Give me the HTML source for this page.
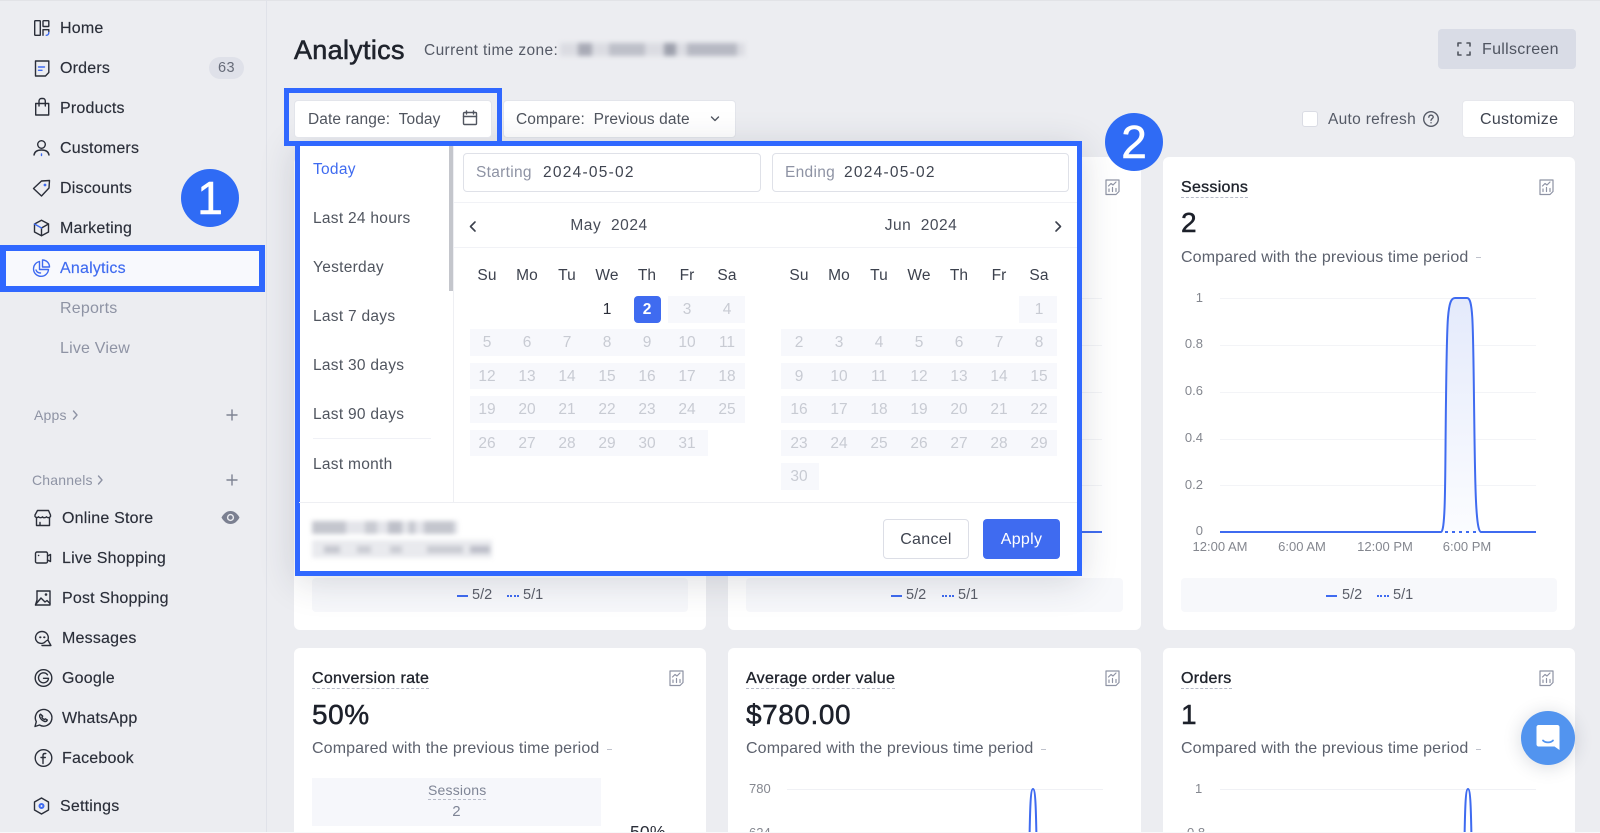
<!DOCTYPE html>
<html><head><meta charset="utf-8"><title>Analytics</title>
<style>
*{box-sizing:border-box}
html,body{margin:0;padding:0;width:1600px;height:833px;overflow:hidden;background:#ECEDF1;font-family:"Liberation Sans",sans-serif;color:#2A2E39}
#w{position:relative;width:1600px;height:833px;overflow:hidden;background:#ECEDF1}
.a{position:absolute}
.t{position:absolute;white-space:nowrap;line-height:20px;font-size:16px;letter-spacing:.2px;transform:translateY(1px)}
.n{color:#2A2E39;left:60px;-webkit-text-stroke:.15px #2A2E39}
.c{left:62px;-webkit-text-stroke:.15px #2A2E39}
.g{color:#8E93A4;-webkit-text-stroke:0}
.btn{position:absolute;background:#fff;border:1px solid #E3E5EB;border-radius:4px}
.card{position:absolute;background:#fff;border-radius:6px}
.sub{color:#5C616D;font-size:16px;letter-spacing:.12px}
.title{color:#1F232C;font-size:16px;font-weight:500;letter-spacing:.28px;border-bottom:1px dashed #B8BCC9;line-height:18px;-webkit-text-stroke:.35px #1F232C}
.val{font-size:28px;letter-spacing:.55px;color:#1C202A;line-height:34px;font-weight:500;-webkit-text-stroke:.5px #1C202A}
.lbl{position:absolute;font-size:13px;color:#84878F;line-height:16px;white-space:nowrap}
.lbl.r{text-align:right;width:40px}
.lbl.mc{text-align:center;width:80px}
.leg{position:absolute;height:34px;background:#F7F8FB;border-radius:4px;top:578px}
.lg{position:absolute;top:587px;font-size:14.5px;line-height:16px;color:#5A5E69;white-space:nowrap}
.b1{position:absolute;top:595px;width:11px;height:2px;background:#3F6BF0}
.b2{position:absolute;top:595px;width:12px;height:0;border-top:2px dotted #3F6BF0}
.m{color:#50555F;left:313px;font-size:15.5px;letter-spacing:.28px}
.row{position:absolute;display:grid;grid-template-columns:repeat(7,40px);height:26.5px;line-height:26.5px;text-align:center;font-size:15.5px;color:#C8CBD3;transform:translateY(1px)}
.head{color:#3C414D;letter-spacing:.1px}
.bg{position:absolute;height:26.5px;background:#F7F8FC}
.blur{position:absolute;filter:blur(2.4px);display:flex;gap:1px;align-items:center}
.blur i{display:block;height:100%}
svg.i{position:absolute;overflow:visible;fill:none;stroke:#2A2E39;stroke-width:1.4;stroke-linejoin:round;stroke-linecap:round}
</style></head>
<body><div id="w">
<div class="a" style="left:0;top:0;width:1600px;height:1px;background:#E2E3E7"></div>
<div class="a" style="left:266px;top:0;width:1px;height:833px;background:#E0E2E9"></div>

<!-- SIDEBAR -->
<svg class="i" style="left:32px;top:18px" width="20" height="20" viewBox="0 0 20 20"><rect x="2.7" y="2.700" width="5.600" height="14.600" rx=".6"/><rect x="11" y="2.700" width="5.800" height="5.800" rx=".6"/><path d="M11 17.300v-5.600h5.800v2"/><path d="M16.800 14.500c0 1.600-1 2.800-2.600 2.800" stroke="#3F6BF0"/></svg>
<div class="t n" style="top:18px">Home</div>
<svg class="i" style="left:32px;top:58px" width="20" height="20" viewBox="0 0 20 20"><path d="M3.500 3h13.300v11.500L13.500 18H3.500z"/><path d="M6.500 9h6M6.500 12.300h3.500" stroke="#3F6BF0"/></svg>
<div class="t n" style="top:58px">Orders</div>
<div class="a" style="left:209px;top:57px;width:35px;height:22px;border-radius:11px;background:#DFE1E9;color:#666B78;font-size:14.500px;line-height:23px;text-align:center;letter-spacing:.4px">63</div>
<svg class="i" style="left:32px;top:97px" width="20" height="20" viewBox="0 0 20 20"><path d="M3.700 6.500h13v11.500h-13z"/><path d="M7 9V4.200C7 2.800 8 1.500 9.300 1.500h1.800c1.300 0 2.200 1.300 2.200 2.700V9"/></svg>
<div class="t n" style="top:98px">Products</div>
<svg class="i" style="left:31px;top:138px" width="20" height="20" viewBox="0 0 20 20"><circle cx="10.500" cy="6.500" r="3.800"/><path d="M3 17c.6-3.600 3.400-5 7.500-5s6.900 1.400 7.500 5"/><path d="M10.500 16v1.500" stroke="#3F6BF0"/></svg>
<div class="t n" style="top:138px">Customers</div>
<svg class="i" style="left:31px;top:178px" width="20" height="20" viewBox="0 0 20 20"><path d="M2.500 10.500 10.500 3l8-.5-.5 7.500-7.500 8z"/><circle cx="14" cy="7" r=".7" stroke="#3F6BF0"/></svg>
<div class="t n" style="top:178px">Discounts</div>
<svg class="i" style="left:31px;top:218px" width="20" height="20" viewBox="0 0 20 20"><path d="M10.500 2.200 17.500 6v8l-7 3.800L3.500 14V6z"/><path d="M10.500 10l7-4M10.500 10v7.500"/><path d="M3.500 6l7 4" stroke="#3F6BF0"/></svg>
<div class="t n" style="top:218px">Marketing</div>

<div class="a" style="left:0;top:245px;width:265px;height:47px;border:6px solid #3068FF;background:#F8F9FD"></div>
<svg class="i" style="left:31px;top:258px;stroke:#3F6BF0" width="20" height="20" viewBox="0 0 20 20"><path d="M8.500 3.500A7.500 7.500 0 1 0 17.500 11.500H8.500z"/><path d="M11.500 2a7 7 0 0 1 7 7h-7z"/><path d="M5 12c.8 2 2.500 3 4.500 3"/></svg>
<div class="t" style="left:60px;top:258px;color:#3F6BF0;-webkit-text-stroke:.15px #3F6BF0">Analytics</div>
<div class="t n g" style="top:298px">Reports</div>
<div class="t n g" style="top:338px">Live View</div>
<div class="a" style="left:181px;top:169px;width:58px;height:58px;border-radius:50%;background:#2F6BF5;color:#fff;font-size:46px;line-height:58px;text-align:center;-webkit-text-stroke:.6px #fff">1</div>

<div class="t g" style="left:34px;top:404px;font-size:14px">Apps</div>
<svg class="i" style="left:71px;top:408px;stroke:#8E93A4" width="8" height="14" viewBox="0 0 8 14"><path d="M2.500 3l3.500 4-3.500 4"/></svg>
<svg class="i" style="left:226px;top:409px;stroke:#7E8393" width="12" height="12" viewBox="0 0 12 12"><path d="M6 1v10M1 6h10"/></svg>
<div class="t g" style="left:32px;top:469px;font-size:14px">Channels</div>
<svg class="i" style="left:96px;top:473px;stroke:#8E93A4" width="8" height="14" viewBox="0 0 8 14"><path d="M2.500 3l3.500 4-3.500 4"/></svg>
<svg class="i" style="left:226px;top:474px;stroke:#7E8393" width="12" height="12" viewBox="0 0 12 12"><path d="M6 1v10M1 6h10"/></svg>

<svg class="i" style="left:33px;top:508px" width="20" height="20" viewBox="0 0 20 20"><path d="M4.500 2.500h11l2 4.500v1.500c-1 1.500-3 1.500-4 .3-1 1.200-3.500 1.200-4 0-1 1.200-3 1.200-4 0-1 1.200-2.500 1-3.500-.3V7z"/><path d="M3.500 9.500v8h13v-8M7 17.500v-3"/></svg>
<div class="t c" style="top:507.500px">Online Store</div>
<svg class="a" style="left:221px;top:510px" width="19" height="15" viewBox="0 0 19 15"><path d="M.5 7.500C3 3 6 1 9.500 1s6.500 2 9 6.500c-2.500 4.500-5.500 6.500-9 6.500S3 12 .5 7.500z" fill="#7B8091"/><circle cx="9.500" cy="7.500" r="3.600" fill="#ECEDF1"/><circle cx="9.500" cy="7.500" r="2.200" fill="#7B8091"/></svg>
<svg class="i" style="left:33px;top:548px" width="20" height="20" viewBox="0 0 20 20"><rect x="2.500" y="4" width="12" height="11" rx="1.500"/><path d="M14.500 8l3-1.500v7l-3-1.500"/><path d="M5.500 7.500h.2"/></svg>
<div class="t c" style="top:547.500px">Live Shopping</div>
<svg class="i" style="left:33px;top:588px" width="20" height="20" viewBox="0 0 20 20"><path d="M4 3h13v14H2.500"/><path d="M4 3v9l-1.500 5"/><path d="M3 16l5-6 4 4 2-1.500 3 3"/><circle cx="13" cy="6.500" r=".6"/></svg>
<div class="t c" style="top:587.500px">Post Shopping</div>
<svg class="i" style="left:33px;top:628px" width="20" height="20" viewBox="0 0 20 20"><path d="M5 14.500C3.300 13.200 2.500 11.500 2.500 9.800 2.500 6.200 5.500 3.500 9 3.500s6.300 2.700 6.300 6.300c0 .8-.1 1.500-.4 2.200"/><path d="M5 14.500c2.500 1.500 5.500 1.200 7-.5 1-1 2-1.800 2.900-2l3 5.500H9"/><path d="M7 9.300h.6M11 9.300h.6" stroke-width="1.800"/></svg>
<div class="t c" style="top:627.500px">Messages</div>
<svg class="i" style="left:33px;top:668px" width="20" height="20" viewBox="0 0 20 20"><circle cx="10.500" cy="10" r="8.300"/><path d="M14.500 6.800a5 5 0 1 0 1 3.500H10.500"/></svg>
<div class="t c" style="top:667.500px">Google</div>
<svg class="i" style="left:33px;top:708px" width="20" height="20" viewBox="0 0 20 20"><path d="M2 18.500l1.300-4.800A8.300 8.300 0 1 1 6.500 17z"/><path d="M7.500 6.200c-1 .8-1.200 2-.3 3.600 1 1.800 2.500 3 4.300 3.600 1.300.3 2.400-.3 2.800-1.400l-2-1.200-1 .8c-1-.4-2-1.400-2.400-2.400l.8-1z"/></svg>
<div class="t c" style="top:707.500px">WhatsApp</div>
<svg class="i" style="left:33px;top:748px" width="20" height="20" viewBox="0 0 20 20"><circle cx="10.500" cy="10" r="8.300"/><path d="M12.800 5.500h-.8c-1.200 0-2 .8-2 2v8M8 9.500h4.300"/></svg>
<div class="t c" style="top:747.500px">Facebook</div>
<svg class="i" style="left:31px;top:796px" width="20" height="20" viewBox="0 0 20 20"><path d="M10.500 2l7 4v8l-7 4-7-4V6z"/><circle cx="10.500" cy="10" r="2" stroke="#3F6BF0" stroke-width="2"/></svg>
<div class="t n" style="top:796px">Settings</div>

<!-- HEADER -->
<div class="t" style="left:294px;top:34px;line-height:30px;font-size:27px;font-weight:500;color:#1F232C;letter-spacing:.3px;-webkit-text-stroke:.6px #1F232C">Analytics</div>
<div class="t" style="left:424px;top:40px;color:#555A66;font-size:15.500px;letter-spacing:.37px">Current time zone:</div>
<div class="blur" style="left:560px;top:43px;width:185px;height:13px;background:#DBDCE2"><i style="margin-left:18px;width:14px;background:#A9ABB6"></i><i style="margin-left:16px;width:36px;background:#BEC0C9"></i><i style="margin-left:18px;width:12px;background:#9EA1AD"></i><i style="margin-left:10px;width:50px;background:#B7B9C3"></i></div>
<div class="a" style="left:1438px;top:29px;width:138px;height:40px;background:#D9DCE6;border-radius:4px"></div>
<svg class="i" style="left:1457px;top:42px;stroke:#50555F;stroke-width:1.600" width="14" height="14" viewBox="0 0 14 14"><path d="M1 4V1h3M10 1h3v3M13 10v3h-3M4 13H1v-3"/></svg>
<div class="t" style="left:1482px;top:39px;color:#4F5460;font-size:16px;letter-spacing:.3px">Fullscreen</div>

<div class="btn" style="left:503px;top:100px;width:233px;height:38px"></div>
<div class="t" style="left:516px;top:109px;color:#50555F;font-size:15.500px;letter-spacing:.1px">Compare:&nbsp; Previous date</div>
<svg class="i" style="left:709px;top:114px;stroke:#50555F" width="12" height="10" viewBox="0 0 12 10"><path d="M2.500 3l3.500 3.500L9.500 3"/></svg>
<div class="a" style="left:1302px;top:111px;width:16px;height:16px;background:#fff;border:1px solid #DADCE4;border-radius:3px"></div>
<div class="t" style="left:1328px;top:109px;color:#555A66;font-size:15.500px;letter-spacing:.3px">Auto refresh</div>
<svg class="i" style="left:1422px;top:110px;stroke:#555A66" width="18" height="18" viewBox="0 0 18 18"><circle cx="9" cy="9" r="7.300"/><path d="M6.800 7.200C7 5.800 8 5.200 9 5.200c1.300 0 2.200.8 2.200 1.900 0 1.600-2.200 1.600-2.200 3.300"/><path d="M9 12.800h.1"/></svg>
<div class="btn" style="left:1462px;top:100px;width:113px;height:38px;border-color:#E7E8ED"></div>
<div class="t" style="left:1480px;top:109px;color:#3F4450;font-size:16px;letter-spacing:.3px">Customize</div>

<!-- CARDS ROW 1 -->
<div class="card" style="left:294px;top:157px;width:412px;height:473px"></div>
<div class="card" style="left:728px;top:157px;width:413px;height:473px"></div>
<div class="card" style="left:1163px;top:157px;width:412px;height:473px"></div>

<div class="leg" style="left:312px;width:376px"></div>
<div class="b1" style="left:457px"></div><div class="lg" style="left:472px">5/2</div><div class="b2" style="left:507px"></div><div class="lg" style="left:523px">5/1</div>
<div class="leg" style="left:746px;width:377px"></div>
<div class="b1" style="left:891px"></div><div class="lg" style="left:906px">5/2</div><div class="b2" style="left:942px"></div><div class="lg" style="left:958px">5/1</div>
<div class="leg" style="left:1181px;width:376px"></div>
<div class="b1" style="left:1326px"></div><div class="lg" style="left:1342px">5/2</div><div class="b2" style="left:1377px"></div><div class="lg" style="left:1393px">5/1</div>

<svg class="i" style="left:1105px;top:179px;stroke:#8E93A4;stroke-width:1.200" width="15" height="16" viewBox="0 0 15 16"><path d="M1 1h13v11.500L11 15.500H1z"/><path d="M3.500 7l2.500-2.500L8 6l3-3M4 12.500V10M7.500 12.500V8.500M11 12.500V9.500"/></svg>
<svg class="a" style="left:1082px;top:290px" width="30" height="250"><g fill="#F3F4F7"><rect y="8" width="20" height="1"/><rect y="55" width="20" height="1"/><rect y="102" width="20" height="1"/><rect y="149" width="20" height="1"/><rect y="195" width="20" height="1"/></g><rect y="241" width="20" height="2" fill="#3F6BF0"/></svg>

<!-- Sessions -->
<div class="t title" style="left:1181px;top:178px">Sessions</div>
<svg class="i" style="left:1539px;top:179px;stroke:#8E93A4;stroke-width:1.200" width="15" height="16" viewBox="0 0 15 16"><path d="M1 1h13v11.500L11 15.500H1z"/><path d="M3.500 7l2.500-2.500L8 6l3-3M4 12.500V10M7.500 12.500V8.500M11 12.500V9.500"/></svg>
<div class="t val" style="left:1181px;top:205px">2</div>
<div class="t sub" style="left:1181px;top:247px">Compared with the previous time period</div>
<div class="a" style="left:1476px;top:257px;width:5px;height:1px;background:#BFC2CC"></div>
<svg class="a" style="left:0;top:0" width="1600" height="833">
<defs><linearGradient id="gr" x1="0" y1="0" x2="0" y2="1"><stop offset="0" stop-color="#E4EAFB"/><stop offset="1" stop-color="#FBFCFF"/></linearGradient></defs>
<g fill="#F3F4F7"><rect x="1220" y="298" width="316" height="1"/><rect x="1220" y="345" width="316" height="1"/><rect x="1220" y="392" width="316" height="1"/><rect x="1220" y="439" width="316" height="1"/><rect x="1220" y="485" width="316" height="1"/></g>
<path d="M1441 532C1446 532 1445 470 1446 400C1447 320 1447 298 1455 298H1467C1473 298 1473 320 1474 400C1475 470 1475 532 1481 532Z" fill="url(#gr)"/>
<path d="M1220 532H1441C1446 532 1445 470 1446 400C1447 320 1447 298 1455 298H1467C1473 298 1473 320 1474 400C1475 470 1475 532 1481 532H1536" fill="none" stroke="#3F6BF0" stroke-width="2"/>
<path d="M1445 532H1478" fill="none" stroke="#3F6BF0" stroke-width="2" stroke-dasharray="3 4"/>
</svg>
<div class="lbl r" style="left:1163px;top:290px">1</div>
<div class="lbl r" style="left:1163px;top:336px">0.8</div>
<div class="lbl r" style="left:1163px;top:383px">0.6</div>
<div class="lbl r" style="left:1163px;top:430px">0.4</div>
<div class="lbl r" style="left:1163px;top:477px">0.2</div>
<div class="lbl r" style="left:1163px;top:523px">0</div>
<div class="lbl mc" style="left:1180px;top:539px">12:00 AM</div>
<div class="lbl mc" style="left:1262px;top:539px">6:00 AM</div>
<div class="lbl mc" style="left:1345px;top:539px">12:00 PM</div>
<div class="lbl mc" style="left:1427px;top:539px">6:00 PM</div>

<!-- MODAL -->
<div class="a" style="left:295px;top:141px;width:787px;height:435px;background:#fff;border:5px solid #3068FF;box-shadow:0 6px 34px rgba(40,45,65,.16)"></div>
<div class="a" style="left:449px;top:146px;width:4px;height:145px;background:#C4C6CC"></div>
<div class="a" style="left:453px;top:146px;width:1px;height:356px;background:#EEEFF3"></div>
<div class="a" style="left:299px;top:502px;width:778px;height:1px;background:#EEEFF3"></div>
<div class="a" style="left:454px;top:202px;width:623px;height:1px;background:#F1F2F6"></div>
<div class="a" style="left:454px;top:247px;width:623px;height:1px;background:#F1F2F6"></div>
<div class="a" style="left:313px;top:438px;width:118px;height:1px;background:#F0F1F6"></div>
<div class="t m" style="top:159px;color:#3F6BF0">Today</div>
<div class="t m" style="top:208px">Last 24 hours</div>
<div class="t m" style="top:257px">Yesterday</div>
<div class="t m" style="top:306px">Last 7 days</div>
<div class="t m" style="top:355px">Last 30 days</div>
<div class="t m" style="top:404px">Last 90 days</div>
<div class="t m" style="top:454px">Last month</div>

<div class="btn" style="left:463px;top:153px;width:298px;height:39px;border-color:#DFE1E8"></div>
<div class="t" style="left:476px;top:162px;color:#8E93A4;font-size:15.500px;letter-spacing:.3px">Starting</div>
<div class="t" style="left:543px;top:162px;color:#3F4450;font-size:15.500px;letter-spacing:1.25px">2024-05-02</div>
<div class="btn" style="left:772px;top:153px;width:297px;height:39px;border-color:#DFE1E8"></div>
<div class="t" style="left:785px;top:162px;color:#8E93A4;font-size:15.500px;letter-spacing:.3px">Ending</div>
<div class="t" style="left:844px;top:162px;color:#3F4450;font-size:15.500px;letter-spacing:1.25px">2024-05-02</div>

<svg class="i" style="left:468px;top:220px;stroke:#3C414D;stroke-width:1.600" width="10" height="13" viewBox="0 0 10 13"><path d="M7 2L2.500 6.500 7 11"/></svg>
<svg class="i" style="left:1053px;top:220px;stroke:#3C414D;stroke-width:1.600" width="10" height="13" viewBox="0 0 10 13"><path d="M3 2l4.500 4.500L3 11"/></svg>
<div class="t" style="left:569px;top:215px;width:80px;text-align:center;color:#474C58;font-size:15.500px;letter-spacing:.55px">May&nbsp; 2024</div>
<div class="t" style="left:881px;top:215px;width:80px;text-align:center;color:#474C58;font-size:15.500px;letter-spacing:.5px">Jun&nbsp; 2024</div>

<div class="row head" style="left:467px;top:262px"><span>Su</span><span>Mo</span><span>Tu</span><span>We</span><span>Th</span><span>Fr</span><span>Sa</span></div>
<div class="row head" style="left:779px;top:262px"><span>Su</span><span>Mo</span><span>Tu</span><span>We</span><span>Th</span><span>Fr</span><span>Sa</span></div>

<div class="bg" style="left:668px;top:296px;width:77px"></div>
<div class="bg" style="left:470px;top:329.400px;width:275px"></div>
<div class="bg" style="left:470px;top:362.900px;width:275px"></div>
<div class="bg" style="left:470px;top:396.300px;width:275px"></div>
<div class="bg" style="left:470px;top:429.700px;width:238px"></div>
<div class="a" style="left:634px;top:296px;width:27px;height:26.500px;background:#3F6BF0;border-radius:4px"></div>
<div class="row" style="left:467px;top:296px"><span></span><span></span><span></span><span style="color:#2A2E39">1</span><span style="color:#fff;font-weight:700">2</span><span>3</span><span>4</span></div>
<div class="row" style="left:467px;top:329.400px"><span>5</span><span>6</span><span>7</span><span>8</span><span>9</span><span>10</span><span>11</span></div>
<div class="row" style="left:467px;top:362.900px"><span>12</span><span>13</span><span>14</span><span>15</span><span>16</span><span>17</span><span>18</span></div>
<div class="row" style="left:467px;top:396.300px"><span>19</span><span>20</span><span>21</span><span>22</span><span>23</span><span>24</span><span>25</span></div>
<div class="row" style="left:467px;top:429.700px"><span>26</span><span>27</span><span>28</span><span>29</span><span>30</span><span>31</span></div>

<div class="bg" style="left:1019px;top:296px;width:38px"></div>
<div class="bg" style="left:781px;top:329.400px;width:276px"></div>
<div class="bg" style="left:781px;top:362.900px;width:276px"></div>
<div class="bg" style="left:781px;top:396.300px;width:276px"></div>
<div class="bg" style="left:781px;top:429.700px;width:276px"></div>
<div class="bg" style="left:781px;top:463px;width:38px"></div>
<div class="row" style="left:779px;top:296px"><span></span><span></span><span></span><span></span><span></span><span></span><span>1</span></div>
<div class="row" style="left:779px;top:329.400px"><span>2</span><span>3</span><span>4</span><span>5</span><span>6</span><span>7</span><span>8</span></div>
<div class="row" style="left:779px;top:362.900px"><span>9</span><span>10</span><span>11</span><span>12</span><span>13</span><span>14</span><span>15</span></div>
<div class="row" style="left:779px;top:396.300px"><span>16</span><span>17</span><span>18</span><span>19</span><span>20</span><span>21</span><span>22</span></div>
<div class="row" style="left:779px;top:429.700px"><span>23</span><span>24</span><span>25</span><span>26</span><span>27</span><span>28</span><span>29</span></div>
<div class="row" style="left:779px;top:463px"><span>30</span></div>

<div class="blur" style="left:312px;top:521px;width:146px;height:13px;background:#E4E5EA"><i style="width:34px;background:#C4C6CE"></i><i style="margin-left:18px;width:12px;background:#C9CBD2"></i><i style="margin-left:10px;width:14px;background:#BEC0C9"></i><i style="margin-left:6px;width:6px;background:#C4C6CE"></i><i style="margin-left:8px;width:30px;background:#C4C6CE"></i></div>
<div class="blur" style="left:312px;top:540px;width:180px;height:18px;background:#E9EAEE"><i style="margin-left:12px;width:16px;height:7px;background:#C4C6CE"></i><i style="margin-left:16px;width:14px;height:7px;background:#CACCD3"></i><i style="margin-left:18px;width:12px;height:7px;background:#CACCD3"></i><i style="margin-left:24px;width:36px;height:7px;background:#C8CAD1"></i><i style="margin-left:6px;width:20px;height:7px;background:#BBBDC7"></i></div>

<div class="btn" style="left:883px;top:519px;width:86px;height:40px;border-color:#DCDEE6"></div>
<div class="t" style="left:883px;top:529px;width:86px;text-align:center;color:#3F4450;font-size:16px;letter-spacing:.3px">Cancel</div>
<div class="a" style="left:983px;top:519px;width:77px;height:40px;background:#3F6BF0;border-radius:4px;color:#fff;font-size:16px;letter-spacing:.3px;line-height:41px;text-align:center">Apply</div>

<div class="a" style="left:284px;top:88px;width:218px;height:58px;border:5px solid #3068FF"></div>
<div class="btn" style="left:294px;top:100px;width:198px;height:38px"></div>
<div class="t" style="left:308px;top:109px;color:#50555F;font-size:15.500px;letter-spacing:.1px">Date range:&nbsp; Today</div>
<svg class="i" style="left:462px;top:110px;stroke:#50555F" width="16" height="16" viewBox="0 0 16 16"><rect x="1.500" y="2.500" width="13" height="12" rx="1"/><path d="M1.500 6.500h13M4.500 1v3M11.500 1v3"/></svg>
<div class="a" style="left:1105px;top:113px;width:58px;height:58px;border-radius:50%;background:#2F6BF5;color:#fff;font-size:46px;line-height:58px;text-align:center;-webkit-text-stroke:.6px #fff">2</div>

<!-- CARDS ROW 2 -->
<div class="card" style="left:294px;top:648px;width:412px;height:190px"></div>
<div class="card" style="left:728px;top:648px;width:413px;height:190px"></div>
<div class="card" style="left:1163px;top:648px;width:412px;height:190px"></div>

<div class="t title" style="left:312px;top:669px">Conversion rate</div>
<svg class="i" style="left:669px;top:670px;stroke:#8E93A4;stroke-width:1.200" width="15" height="16" viewBox="0 0 15 16"><path d="M1 1h13v11.500L11 15.500H1z"/><path d="M3.500 7l2.500-2.500L8 6l3-3M4 12.500V10M7.500 12.500V8.500M11 12.500V9.500"/></svg>
<div class="t val" style="left:312px;top:697px">50%</div>
<div class="t sub" style="left:312px;top:738px">Compared with the previous time period</div>
<div class="a" style="left:607px;top:749px;width:5px;height:1px;background:#BFC2CC"></div>
<div class="a" style="left:312px;top:778px;width:289px;height:48px;background:#F6F7FB"></div>
<div class="t" style="left:428px;top:781px;font-size:14px;color:#7F8596;line-height:17px;border-bottom:1px dashed #B8BCC9">Sessions</div>
<div class="t" style="left:312px;top:801px;width:289px;text-align:center;font-size:15px;color:#7F8596">2</div>
<div class="t" style="left:630px;top:821px;font-size:17.500px;color:#2A2E39">50%</div>

<div class="t title" style="left:746px;top:669px">Average order value</div>
<svg class="i" style="left:1105px;top:670px;stroke:#8E93A4;stroke-width:1.200" width="15" height="16" viewBox="0 0 15 16"><path d="M1 1h13v11.500L11 15.500H1z"/><path d="M3.500 7l2.500-2.500L8 6l3-3M4 12.500V10M7.500 12.500V8.500M11 12.500V9.500"/></svg>
<div class="t val" style="left:746px;top:697px">$780.00</div>
<div class="t sub" style="left:746px;top:738px">Compared with the previous time period</div>
<div class="a" style="left:1041px;top:749px;width:5px;height:1px;background:#BFC2CC"></div>
<div class="lbl" style="left:749px;top:781px">780</div>
<div class="lbl" style="left:749px;top:825px">624</div>

<div class="t title" style="left:1181px;top:669px">Orders</div>
<svg class="i" style="left:1539px;top:670px;stroke:#8E93A4;stroke-width:1.200" width="15" height="16" viewBox="0 0 15 16"><path d="M1 1h13v11.500L11 15.500H1z"/><path d="M3.500 7l2.500-2.500L8 6l3-3M4 12.500V10M7.500 12.500V8.500M11 12.500V9.500"/></svg>
<div class="t val" style="left:1181px;top:697px">1</div>
<div class="t sub" style="left:1181px;top:738px">Compared with the previous time period</div>
<div class="a" style="left:1476px;top:749px;width:5px;height:1px;background:#BFC2CC"></div>
<div class="lbl" style="left:1195px;top:781px">1</div>
<div class="lbl" style="left:1187px;top:825px">0.8</div>
<svg class="a" style="left:0;top:0" width="1600" height="833">
<rect x="787" y="789" width="316" height="1" fill="#F0F1F5"/><rect x="1220" y="789" width="316" height="1" fill="#F0F1F5"/>
<path d="M1029.500 840C1030 810 1030.500 789 1033 789S1036 810 1036.500 840" fill="none" stroke="#3F6BF0" stroke-width="2"/>
<path d="M1464.500 840C1465 810 1465.500 789 1468 789S1471 810 1471.500 840" fill="none" stroke="#3F6BF0" stroke-width="2"/>
</svg>

<!-- CHAT -->
<div class="a" style="left:1521px;top:711px;width:54px;height:54px;border-radius:50%;background:#5294EF;box-shadow:0 2px 18px rgba(40,50,80,.18)"></div>
<svg class="a" style="left:1535px;top:724px" width="26" height="28" viewBox="0 0 26 28"><path d="M3.500 1h19c1 0 2 1 2 2v23l-5-3.500h-16c-1 0-2-1-2-2V3c0-1 1-2 2-2z" fill="#fff"/><path d="M8 16.500c2.500 2.500 7.500 2.500 10 0" fill="none" stroke="#5294EF" stroke-width="1.800" stroke-linecap="round"/></svg>
<div class="a" style="left:0;top:832px;width:1600px;height:1px;background:#F8F8FA"></div>
</div></body></html>
